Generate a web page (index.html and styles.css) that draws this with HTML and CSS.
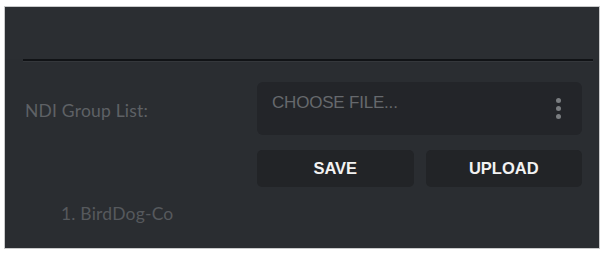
FILE: index.html
```html
<!DOCTYPE html>
<html>
<head>
<meta charset="utf-8">
<link rel="stylesheet" href="styles.css">
</head>
<body>
<div class="panel">
  <div class="header"></div>
  <div class="divider"></div>
  <div class="content">
    <div class="label">NDI Group List:</div>
    <div class="file-box">
      <span class="file-text">CHOOSE FILE...</span>
      <span class="kebab"><i></i><i></i><i></i></span>
    </div>
    <div></div>
    <div class="buttons">
      <button class="btn">SAVE</button>
      <button class="btn">UPLOAD</button>
    </div>
    <div class="item">1. BirdDog-Co</div>
  </div>
</div>
</body>
</html>
```
FILE: styles.css
```css
html, body {
  margin: 0;
  padding: 0;
  background: #ffffff;
}
.panel {
  margin: 6px 3px 4px 4px;
  height: 243px;
  box-sizing: border-box;
  border: 1px solid #c9cacb;
  background: #2a2d31;
  display: flex;
  flex-direction: column;
  overflow: hidden;
}
.header {
  height: 52px;
  background: #2b2e32;
}
.divider {
  height: 2px;
  margin: 0 6px 0 18px;
  background: #111316;
  border-bottom: 1px solid #34373b;
}
.content {
  display: grid;
  grid-template-columns: 252px 325px;
  grid-template-rows: 53px 37px auto;
  row-gap: 15px;
  padding-top: 20px;
}
.label {
  align-self: center;
  padding-left: 20px;
  padding-top: 4px;
  font-family: "Lato", "Liberation Sans", sans-serif;
  font-size: 17.5px;
  letter-spacing: 0.2px;
  color: #5e6165;
}
.file-box {
  background: #232529;
  border-radius: 6px;
  display: flex;
  justify-content: space-between;
  padding: 0 21px 0 15px;
}
.file-text {
  padding-top: 11px;
  font-family: "Liberation Sans", Arial, sans-serif;
  font-size: 17px;
  color: #66696d;
  letter-spacing: -0.2px;
}
.kebab {
  align-self: center;
  display: flex;
  flex-direction: column;
  gap: 3px;
}
.kebab i {
  display: block;
  width: 5px;
  height: 5px;
  border-radius: 50%;
  background: #7a7d80;
}
.buttons {
  display: grid;
  grid-template-columns: 1fr 1fr;
  column-gap: 12px;
}
.btn {
  border: none;
  border-radius: 5px;
  background: #222427;
  color: #f2f2f2;
  font-family: "Liberation Sans", Arial, sans-serif;
  font-weight: bold;
  font-size: 16.5px;
  padding: 0;
}
.item {
  grid-column: 1 / 3;
  padding-left: 56px;
  padding-top: 1px;
  font-family: "Lato", "Liberation Sans", sans-serif;
  font-size: 17.5px;
  letter-spacing: 0.2px;
  color: #56595d;
}
```
